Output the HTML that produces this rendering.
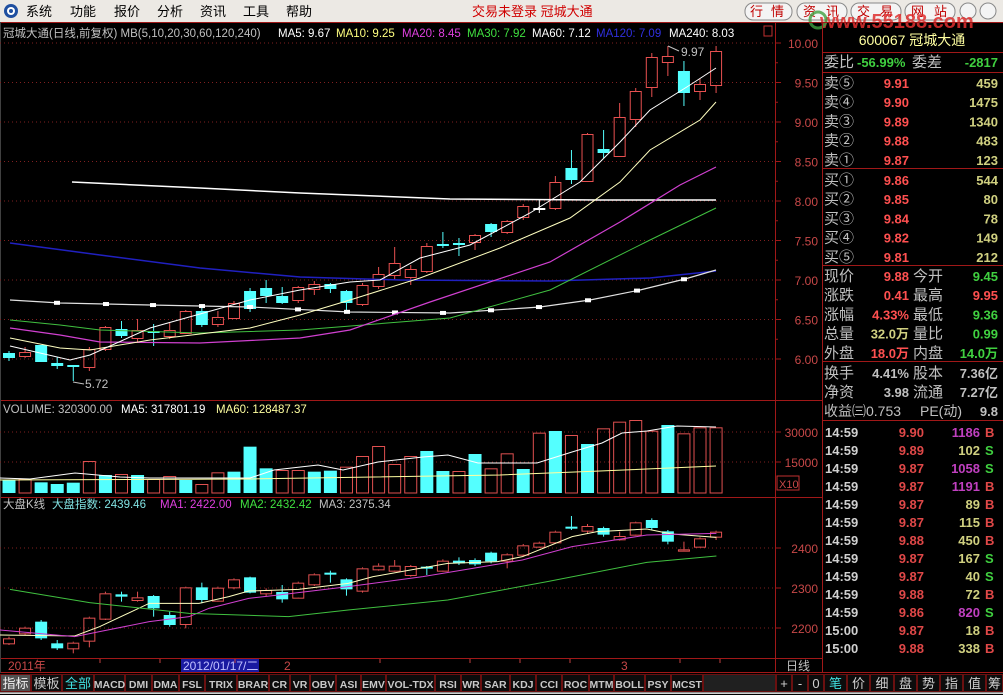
<!DOCTYPE html>
<html><head><meta charset="utf-8">
<style>
html,body{margin:0;padding:0;background:#000;width:1003px;height:695px;overflow:hidden}
svg{display:block}
text{font-family:"Liberation Sans","Noto Sans CJK SC",sans-serif}
</style></head><body>
<svg id="s" width="1003" height="695" xmlns="http://www.w3.org/2000/svg">
<rect x="0" y="0" width="1003" height="695" fill="#000"/>
<rect x="0" y="0" width="1003" height="22" fill="#ece9e4"/>
<circle cx="11" cy="11" r="7" fill="#2050a0"/><circle cx="11" cy="11" r="4" fill="#fff"/><circle cx="11" cy="11" r="2" fill="#2050a0"/>
<g font-size="13" fill="#000">
<text x="26" y="16">系统</text><text x="70" y="16">功能</text><text x="114" y="16">报价</text><text x="157" y="16">分析</text><text x="200" y="16">资讯</text><text x="243" y="16">工具</text><text x="286" y="16">帮助</text>
</g>
<text x="472" y="16" font-size="13" fill="#d00000">交易未登录  冠城大通</text>
<g font-size="13" fill="#c00000" stroke="#888" stroke-width="1">
<rect x="745" y="3" width="47" height="17" rx="8" fill="#f4f4f4"/>
<rect x="797" y="3" width="50" height="17" rx="8" fill="#f4f4f4"/>
<rect x="851" y="3" width="50" height="17" rx="8" fill="#f4f4f4"/>
<rect x="905" y="3" width="50" height="17" rx="8" fill="#f4f4f4"/>
<circle cx="968" cy="11" r="8" fill="#f4f4f4"/><circle cx="988" cy="11" r="8" fill="#f4f4f4"/>
</g>
<g font-size="13" fill="#c00000">
<text x="750" y="16" letter-spacing="8">行情</text><text x="803" y="16" letter-spacing="10">资讯</text><text x="857" y="16" letter-spacing="10">交易</text><text x="911" y="16" letter-spacing="10">网站</text>
</g>
<text x="820" y="28" font-size="20" font-weight="bold" fill="#e03030" opacity="0.85">www.55188.com</text>
<circle cx="818" cy="20" r="8" fill="none" stroke="#40a040" stroke-width="3" opacity="0.8"/>
<g id="dyn"></g>
</svg>
<script>
var g=document.getElementById('dyn'),h='';
function T(x,y,t,c,sz,extra){h+='<text x="'+x+'" y="'+y+'" fill="'+c+'" font-size="'+(sz||12)+'" '+(extra||'')+'>'+t+'</text>';}
function L(x1,y1,x2,y2,c,w,d){h+='<line x1="'+x1+'" y1="'+y1+'" x2="'+x2+'" y2="'+y2+'" stroke="'+c+'" stroke-width="'+(w||1)+'" '+(d?'stroke-dasharray="'+d+'"':'')+'/>';}
function R(x,y,w,hh,f,s){h+='<rect x="'+x+'" y="'+y+'" width="'+w+'" height="'+hh+'" fill="'+f+'" '+(s?'stroke="'+s+'"':'')+'/>';}
function P(pts,c,w){h+='<polyline points="'+pts.map(function(p){return p[0]+','+p[1]}).join(' ')+'" fill="none" stroke="'+c+'" stroke-width="'+(w||1)+'"/>';}
function interp(pts,x){for(var i=1;i<pts.length;i++){if(x<=pts[i][0]){var a=pts[i-1],b=pts[i];return a[1]+(b[1]-a[1])*(x-a[0])/(b[0]-a[0]);}}return pts[pts.length-1][1];}
var RED='#a01818',CY='#54ffff';
L(0,22.5,1003,22.5,RED);L(775.5,22,775.5,673,RED);L(822.5,22,822.5,673,RED);
L(0,400.5,822,400.5,RED);L(0,497.5,822,497.5,RED);L(0,658.5,822,658.5,RED);L(0,672.5,1003,672.5,RED);
L(0.5,22,0.5,673,'#404040');
for(var p=6;p<=10.01;p+=0.5){var y=43+(10-p)*79;L(0,y,775,y,'#802020',1,'1,3');L(775,y,781,y,RED);T(818,y+5,p.toFixed(2),'#c84848',12,'text-anchor="end"');}
for(var p=6.25;p<10;p+=0.5){var y=43+(10-p)*79;L(775,y,778,y,RED);}
R(764,26,8,10,'none','#c03030');
var hp=[[3,'冠城大通(日线,前复权) MB(5,10,20,30,60,120,240)','#c0c0c0'],[278,'MA5: 9.67','#fff'],[336,'MA10: 9.25','#ffff80'],[402,'MA20: 8.45','#e040e0'],[467,'MA30: 7.92','#40e040'],[532,'MA60: 7.12','#fff'],[596,'MA120: 7.09','#3030e0'],[669,'MA240: 8.03','#fff']];
hp.forEach(function(a){T(a[0],37,a[1],a[2],11.5);});
function cx(i){return 9+i*16.07;}
var C=[['c',353,358,351,361],['r',352,356,347,358],['c',345,362,345,362],['c',363,366,357,369],['c',365,366,365,381],['r',349,367,347,371],['r',327,349,326,351],['c',329,336,321,338],['r',330,338,319,342],['c',331,333,324,346],['r',330,336,323,339],['r',311,333,310,334],['c',311,325,304,327],['r',317,324,311,327],['r',303,318,301,319],['c',291,309,288,312],['c',288,296,280,303],['c',296,303,287,304],['r',287,300,286,303],['r',284,289,281,295],['c',284,289,283,293],['c',291,303,290,312],['r',285,304,283,306],['r',274,286,267,289],['r',263,275,247,280],['r',269,277,265,285],['r',246,271,243,273],['c',244,246,232,248],['c',243,245,238,256],['r',235,242,234,250],['c',224,232,223,237],['r',221,232,220,234],['r',206,217,204,220],['w',208,208,200,213],['r',182,208,176,210],['c',168,180,150,184],['r',134,181,133,182],['c',149,153,130,158],['r',117,156,103,157],['r',91,119,88,127],['r',57,87,53,97],['r',56,62,46,76],['c',71,93,61,106],['r',84,91,79,100],['r',51,85,46,93]];
C.forEach(function(c,i){var x=cx(i);var col=c[0]=='r'?'#e85050':(c[0]=='c'?CY:'#fff');
 if(c[0]=='r'){L(x,c[3],x,c[1],col);L(x,c[2],x,c[4],col);R(x-5.5,c[1]+.5,11,Math.max(c[2]-c[1],1),'none',col);}
 else{L(x,c[3],x,c[4],col);R(x-6,c[1],12,Math.max(c[2]-c[1],2),col);}});
T(85,388,'5.72','#c0c0c0',12);L(73,382,84,384,'#c0c0c0');
T(681,56,'9.97','#c0c0c0',12);L(668,46,679,51,'#c0c0c0');
P([[72,182],[200,188],[300,193],[450,199],[600,200],[716,200]],'#ffffff',1.5);
P([[10,243],[100,255],[200,268],[300,277],[400,280],[550,281],[650,278],[716,271]],'#2020c0',1.5);
var M60=[[10,300],[60,303],[150,305],[250,307],[350,312],[450,313],[540,307],[590,300],[640,290],[685,279],[716,270]];
P(M60,'#e0e0e0',1.2);
[57,106,153,202,250,298,347,395,443,491,539,588,637,684].forEach(function(x){var y=interp(M60,x);R(x-3,y-2,6,4,'#fff');});
P([[10,320],[60,325],[100,330],[200,333],[300,330],[400,322],[450,318],[550,290],[650,240],[716,208]],'#40c040');
P([[10,328],[60,335],[100,342],[200,343],[300,338],[350,330],[430,302],[550,262],[620,222],[680,185],[716,167]],'#d040d0',1.2);
P([[10,338],[60,348],[90,350],[150,340],[250,328],[300,315],[350,300],[420,278],[500,248],[570,218],[620,182],[650,150],[700,120],[716,102]],'#ffffc0');
P([[10,346],[70,360],[90,355],[150,328],[250,300],[300,290],[350,282],[380,280],[420,258],[470,245],[530,213],[580,182],[620,142],[650,110],[690,85],[716,68]],'#ffffff');
T(3,413,'VOLUME: 320300.00','#c0c0c0',11.5);T(121,413,'MA5: 317801.19','#fff',11.5);T(216,413,'MA60: 128487.37','#ffffa0',11.5);
[432,462].forEach(function(y){L(0,y,775,y,'#802020',1,'1,3');L(775,y,781,y,RED);});
T(818,437,'30000','#c84848',12,'text-anchor="end"');T(818,467,'15000','#c84848',12,'text-anchor="end"');
R(777,476,22,14,'none','#c03030');T(779,488,'X10','#c84848',11);
var V=[['c',240],['r',237],['c',247],['c',252],['c',248],['r',183],['c',225],['r',222],['c',225],['r',237],['r',228],['c',240],['r',252],['r',217],['c',215],['c',140],['c',205],['r',210],['r',210],['c',215],['c',212],['r',200],['r',168],['r',138],['r',192],['r',168],['c',153],['c',213],['r',213],['c',162],['r',205],['r',160],['c',207],['r',98],['c',93],['r',105],['c',132],['r',85],['r',65],['r',60],['r',92],['c',75],['r',100],['r',82],['r',82]];
V.forEach(function(v,i){var x=cx(i),t=400+v[1]/3,b=493;if(v[0]=='c')R(x-6.5,t,13,b-t,CY);else R(x-6,t+.5,12,b-t-.5,'none','#e05050');});
P([[0,478],[30,479],[75,473],[120,477],[150,478],[250,478],[274,470],[318,465],[343,470],[378,462],[423,457],[448,455],[478,463],[498,463],[537,463],[572,452],[602,443],[622,433],[647,431],[677,426],[716,427]],'#fff');
P([[0,480],[250,479],[500,475],[600,471],[716,466]],'#ffffa0');
T(3,508,'大盘K线','#c0c0c0',11.5);T(52,508,'大盘指数: 2439.46','#80e0e0',11.5);T(160,508,'MA1: 2422.00','#e040e0',11.5);T(240,508,'MA2: 2432.42','#40e040',11.5);T(319,508,'MA3: 2375.34','#c0c0c0',11.5);
[548,588,628].forEach(function(y,k){L(0,y,775,y,'#802020',1,'1,3');L(775,y,781,y,RED);T(818,y+5,['2400','2300','2200'][k],'#c84848',12,'text-anchor="end"');});
var K=[['r',715,730,710,735],['r',683,700,680,705],['c',665,715,660,720],['c',730,745,720,750],['r',728,745,725,760],['r',653,722,650,742],['r',580,656,575,660],['c',583,590,575,605],['r',592,600,575,605],['c',588,625,585,650],['c',645,675,635,680],['r',562,672,560,685],['c',562,600,548,610],['r',563,602,560,605],['r',538,562,535,568],['c',532,578,530,580],['r',570,580,565,590],['c',576,598,555,608],['r',548,593,545,595],['r',523,553,520,558],['c',518,520,512,548],['c',538,568,535,587],['r',505,572,502,578],['r',497,508,490,512],['r',497,512,480,515],['r',498,525,495,530],['c',500,505,498,525],['r',482,512,478,515],['c',482,490,472,495],['c',480,493,475,498],['c',458,484,455,490],['r',463,482,460,505],['r',436,464,432,470],['r',428,440,425,443],['r',395,427,392,430],['c',380,385,348,390],['r',378,392,372,400],['c',384,404,380,410],['r',408,418,395,422],['r',367,404,365,407],['c',360,384,355,390],['c',394,425,390,433],['r',448,452,425,453],['r',415,440,412,442],['r',395,410,392,420]];
K.forEach(function(c,i){var x=cx(i),f=function(v){return 400+v/3;};var t=f(c[1]),b=f(c[2]),hi=f(c[3]),lo=f(c[4]);
 if(c[0]=='r'){L(x,hi,x,t,'#e05050');L(x,b,x,lo,'#e05050');R(x-5.5,t+.5,11,Math.max(b-t,1),'none','#e05050');}
 else{L(x,hi,x,lo,CY);R(x-6,t,12,Math.max(b-t,2),CY);}});
function cv(a){return a.map(function(p){return [p[0]/2.01,400+p[1]/3];});}
P(cv([[0,705],[150,708],[200,680],[300,610],[400,610],[460,590],[500,573],[600,568],[700,550],[750,530],[900,490],[1000,485],[1050,470],[1150,410],[1200,395],[1300,387],[1350,402],[1440,412]]),'#ffffc0');
P(cv([[0,690],[150,710],[200,695],[300,665],[380,650],[420,625],[500,595],[560,585],[700,560],[850,530],[950,505],[1050,480],[1150,440],[1300,405],[1440,400]]),'#d040d0');
P(cv([[20,568],[180,608],[380,640],[580,650],[700,630],[900,600],[1100,545],[1300,487],[1440,468]]),'#40c040');
T(8,670,'2011年','#c84848',12);R(181,659,78,13,'#1a1aa0');T(183,670,'2012/01/17/二','#c0c0ff',12);T(284,670,'2','#c84848',12);T(621,670,'3','#c84848',12);
[100,160,235,380,470,520,570,680,720].forEach(function(x){L(x,659,x,663,'#c04040');});
T(786,670,'日线','#c0c0c0',12);L(776,658.5,822,658.5,RED);
T(912,45,'600067 冠城大通','#ffffa0',14,'text-anchor="middle"');
L(822,52.5,1003,52.5,RED);L(822,72.5,1003,72.5,RED);L(822,168.5,1003,168.5,RED);L(822,265.5,1003,265.5,RED);L(822,361.5,1003,361.5,RED);L(822,420.5,1003,420.5,RED);
T(824,67,'委比','#c0c0c0',15);T(857,67,'-56.99%','#40d040',13,'font-weight="bold"');T(912,67,'委差','#c0c0c0',15);T(998,67,'-2817','#40d040',13,'font-weight="bold" text-anchor="end"');
var S=[['卖⑤','9.91','459'],['卖④','9.90','1475'],['卖③','9.89','1340'],['卖②','9.88','483'],['卖①','9.87','123'],['买①','9.86','544'],['买②','9.85','80'],['买③','9.84','78'],['买④','9.82','149'],['买⑤','9.81','212']];
S.forEach(function(s,i){var y=i<5?88+i*19.2:185+(i-5)*19.2;T(824,y,s[0],'#c0c0c0',15);T(909,y,s[1],'#ff5050',13,'font-weight="bold" text-anchor="end"');T(998,y,s[2],'#d0d080',13,'font-weight="bold" text-anchor="end"');});
var Q=[['现价','9.88','#ff5050','今开','9.45','#40d040'],['涨跌','0.41','#ff5050','最高','9.95','#ff5050'],['涨幅','4.33%','#ff5050','最低','9.36','#40d040'],['总量','32.0万','#d0d080','量比','0.99','#40d040'],['外盘','18.0万','#ff5050','内盘','14.0万','#40d040']];
Q.forEach(function(q,i){var y=281+i*19.2;T(824,y,q[0],'#c0c0c0',15);T(909,y,q[1],q[2],13,'font-weight="bold" text-anchor="end"');T(913,y,q[3],'#c0c0c0',15);T(998,y,q[4],q[5],13,'font-weight="bold" text-anchor="end"');});
var Z=[['换手','4.41%','股本','7.36亿'],['净资','3.98','流通','7.27亿'],['收益㈢0.753','','PE(动)','9.8']];
Z.forEach(function(q,i){var y=378+i*19;T(824,y,q[0],'#c0c0c0',q[1]?15:14);if(q[1])T(909,y,q[1],'#c0c0c0',13,'font-weight="bold" text-anchor="end"');T(q[1]?913:920,y,q[2],'#c0c0c0',q[1]?15:14);T(998,y,q[3],'#c0c0c0',13,'font-weight="bold" text-anchor="end"');});
var TK=[['14:59','9.90','1186','B','#c040c0'],['14:59','9.89','102','S','#d0d080'],['14:59','9.87','1058','S','#c040c0'],['14:59','9.87','1191','B','#c040c0'],['14:59','9.87','89','B','#d0d080'],['14:59','9.87','115','B','#d0d080'],['14:59','9.88','450','B','#d0d080'],['14:59','9.87','167','S','#d0d080'],['14:59','9.87','40','S','#d0d080'],['14:59','9.88','72','B','#d0d080'],['14:59','9.86','820','S','#c040c0'],['15:00','9.87','18','B','#d0d080'],['15:00','9.88','338','B','#d0d080']];
TK.forEach(function(t,i){var y=437+i*18;T(825,y,t[0],'#d0d0d0',13,'font-weight="bold"');T(924,y,t[1],'#e04848',13,'font-weight="bold" text-anchor="end"');T(980,y,t[2],t[4],13,'font-weight="bold" text-anchor="end"');T(985,y,t[3],t[3]=='B'?'#e04848':'#40d040',13,'font-weight="bold"');});
R(0,673,1003,22,'#000');L(0,692.5,1003,692.5,'#909090');L(0,693.5,1003,693.5,'#d0d0d0');
var tabs=['指标','模板','全部','MACD','DMI','DMA','FSL','TRIX','BRAR','CR','VR','OBV','ASI','EMV','VOL-TDX','RSI','WR','SAR','KDJ','CCI','ROC','MTM','BOLL','PSY','MCST'];
var tx=[0,31,62,94,125,152,179,205,237,269,290,310,336,361,386,435,461,481,510,536,562,589,614,645,671,703];
for(var i=0;i<tabs.length;i++){var x=tx[i],w=tx[i+1]-x;R(x+.5,674.5,w-1,17,i==0?'#505050':'#0c0c0c','#6a1010');
 var col=i==0?'#f0f0f0':(i==2?'#40e0e0':'#c8c8c8');T(x+w/2,688,tabs[i],col,i<3?13:10.5,'text-anchor="middle" '+(i<3?'':'font-family="Liberation Mono" font-weight="bold"'));}
R(703.5,674.5,72,17,'#202020','#6a1010');
var bt=['+','-','0','笔','价','细','盘','势','指','值','筹'],bx=[776,792,808,824,847,870,894,917,940,963,986,1003];
for(var i=0;i<bt.length;i++){R(bx[i]+.5,674.5,bx[i+1]-bx[i]-1,17,'#0c0c0c','#6a1010');T((bx[i]+bx[i+1])/2,688,bt[i],i==3?'#40e0e0':'#d0d0d0',13,'text-anchor="middle"');}
g.innerHTML=h;
</script>
</body></html>
